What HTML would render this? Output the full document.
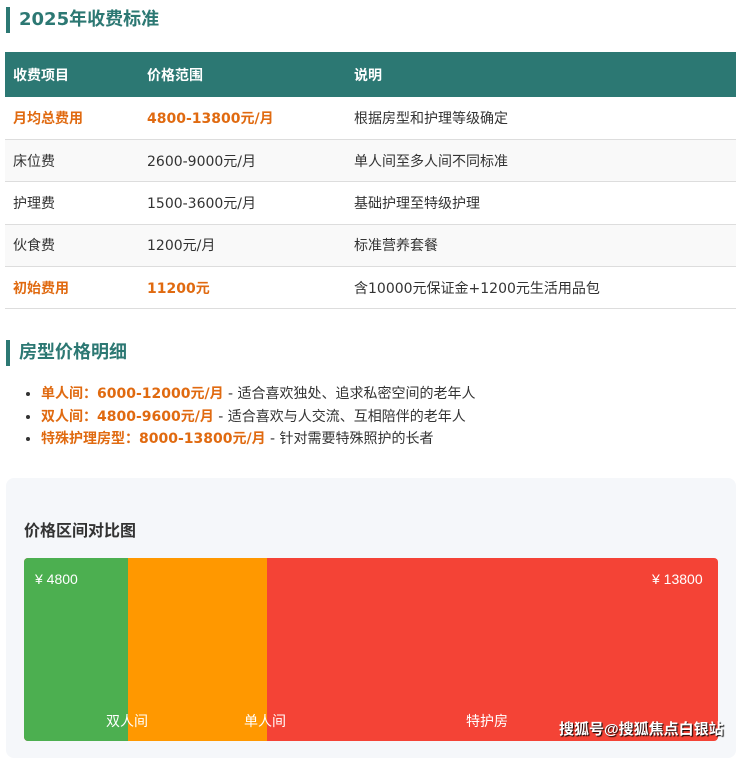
<!DOCTYPE html>
<html><head><meta charset="utf-8"><style>
*{margin:0;padding:0;box-sizing:border-box}
body{width:740px;height:745px;overflow:hidden;background:#fff;font-family:"DejaVu Sans","Noto Sans CJK SC",sans-serif;color:#333;position:relative}
.h{position:absolute;left:6px;border-left:4px solid #2c7873;padding-left:9px;font-size:18px;font-weight:bold;color:#2c7873;height:26px;line-height:26px}
table{position:absolute;left:5px;top:52px;width:731px;border-collapse:collapse;font-size:14px}
th{background:#2c7873;color:#fff;text-align:left;height:45px;font-weight:bold;padding-left:8px}
td{height:42.4px;padding-left:8px;border-bottom:1px solid #ddd}
tr:nth-child(odd) td{background:#f9f9f9}
.o{color:#e06a10;font-weight:bold}
ul{position:absolute;left:41px;top:383px;font-size:14px;line-height:22.5px}
li::marker{color:#333}
.chart{position:absolute;left:6px;top:478px;width:730px;height:280px;background:#f5f7fa;border-radius:8px}
.bar{position:absolute;left:24px;top:558px;width:694px;height:183px;border-radius:4px;overflow:hidden;background:#f44336}
.bar div{position:absolute;top:0;bottom:0}
.t{position:absolute;color:#fff;font-size:14px;font-family:"Liberation Sans","Noto Sans CJK SC",sans-serif}
</style></head><body>
<div class="h" style="top:7px">2025年收费标准</div>
<table>
<tr><th style="width:134px">收费项目</th><th style="width:207px">价格范围</th><th>说明</th></tr>
<tr><td class="o">月均总费用</td><td class="o">4800-13800元/月</td><td>根据房型和护理等级确定</td></tr>
<tr><td>床位费</td><td>2600-9000元/月</td><td>单人间至多人间不同标准</td></tr>
<tr><td>护理费</td><td>1500-3600元/月</td><td>基础护理至特级护理</td></tr>
<tr><td>伙食费</td><td>1200元/月</td><td>标准营养套餐</td></tr>
<tr><td class="o">初始费用</td><td class="o">11200元</td><td>含10000元保证金+1200元生活用品包</td></tr>
</table>
<div class="h" style="top:340px">房型价格明细</div>
<ul>
<li><span class="o">单人间：6000-12000元/月</span> - 适合喜欢独处、追求私密空间的老年人</li>
<li><span class="o">双人间：4800-9600元/月</span> - 适合喜欢与人交流、互相陪伴的老年人</li>
<li><span class="o">特殊护理房型：8000-13800元/月</span> - 针对需要特殊照护的长者</li>
</ul>
<div class="chart"></div>
<div style="position:absolute;left:24px;top:517px;font-size:16px;font-weight:bold;color:#333">价格区间对比图</div>
<div class="bar">
<div style="left:0;width:104px;background:#4caf50"></div>
<div style="left:104px;width:139px;background:#ff9800"></div>
</div>
<div class="t" style="left:35px;top:571px">¥ 4800</div>
<div class="t" style="left:652px;top:571px">¥ 13800</div>
<div class="t" style="left:106px;top:711px">双人间</div>
<div class="t" style="left:244px;top:711px">单人间</div>
<div class="t" style="left:466px;top:711px">特护房</div>
<div class="t" style="left:559px;top:718px;font-size:15px;font-weight:bold;text-shadow:1px 1px 1px #000">搜狐号@搜狐焦点白银站</div>
</body></html>
